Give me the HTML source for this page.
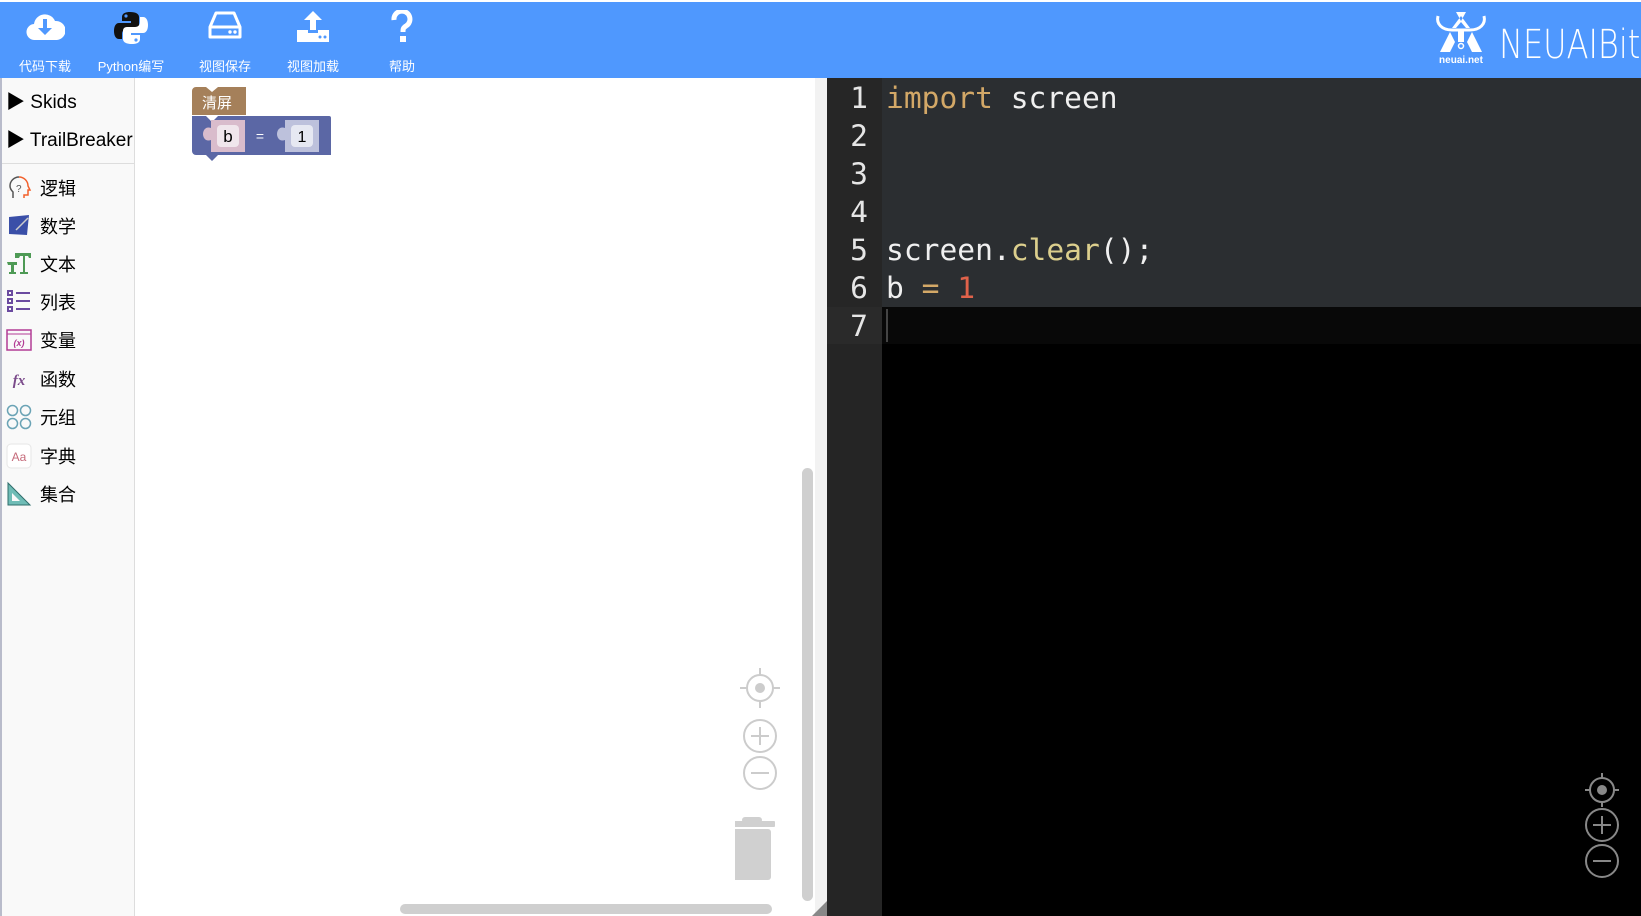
<!DOCTYPE html>
<html><head><meta charset="utf-8"><style>
*{margin:0;padding:0;box-sizing:border-box}
body{width:1641px;height:916px;overflow:hidden;position:relative;background:#fff;font-family:"Liberation Sans","Noto Sans CJK SC",sans-serif}
.hdr{position:absolute;left:0;top:2px;width:1641px;height:76px;background:#4f98fe}
.tb{position:absolute;top:0;width:90px;text-align:center;color:#fff;font-size:13px}
.tb svg{position:absolute;left:50%;transform:translateX(-50%);top:8px}
.tb span{position:absolute;left:0;right:0;top:54px}
.side{position:absolute;left:0;top:78px;width:135px;height:838px;background:#f9f9f9;border-right:1px solid #ddd}
.side:before{content:"";position:absolute;left:0;top:0;width:2px;height:100%;background:#b9bccb}
.it{position:absolute;left:40px;font-size:18px;color:#000}
.tr{position:absolute;left:6px;font-size:19px;color:#000}
.ic{position:absolute;left:6px;width:26px;height:26px}
.ed{position:absolute;left:827px;top:78px;width:814px;height:838px;background:#000}
.mono{font-family:"DejaVu Sans Mono","Liberation Mono",monospace;font-size:29.6px}
.ln{position:absolute;left:0;width:41px;text-align:right;color:#e6e6e6}
.cd{position:absolute;left:59px;color:#f0f0f0;white-space:pre}
.tx{position:absolute;left:0;right:0;top:3px}
</style></head><body>
<div class="hdr">
 <div class="tb" style="left:0">
  <svg width="40" height="34" viewBox="0 0 40 34"><path d="M10 30a8 8 0 0 1-1-16 11 11 0 0 1 21-3 8 8 0 0 1 2 19z" fill="#fff"/><path d="M18 9h4v9h5l-7 7-7-7h5z" fill="#4f98fe"/></svg>
  <span>代码下载</span></div>
 <div class="tb" style="left:86px">
  <svg width="34" height="36" viewBox="0 0 34 36"><path d="M16 2c-7 0-8 3-8 5v4h9v2H5c-3 0-5 3-5 8s2 8 5 8h3v-5c0-3 2-5 5-5h8c3 0 4-2 4-4V7c0-3-3-5-9-5z" fill="#111"/><circle cx="12" cy="6" r="1.6" fill="#4f98fe"/><path d="M18 34c7 0 8-3 8-5v-4h-9v-2h12c3 0 5-3 5-8s-2-8-5-8h-3v5c0 3-2 5-5 5h-8c-3 0-4 2-4 4v8c0 3 3 5 9 5z" fill="#fff"/><circle cx="22" cy="30" r="1.6" fill="#4f98fe"/></svg>
  <span>Python编写</span></div>
 <div class="tb" style="left:180px">
  <svg width="34" height="30" viewBox="0 0 34 30"><path d="M8 3h18l6 14v10H2V17z" fill="none" stroke="#fff" stroke-width="3" stroke-linejoin="round"/><path d="M2 17h30" stroke="#fff" stroke-width="3"/><circle cx="22" cy="22" r="1.7" fill="#fff"/><circle cx="27" cy="22" r="1.7" fill="#fff"/></svg>
  <span>视图保存</span></div>
 <div class="tb" style="left:268px">
  <svg width="36" height="34" viewBox="0 0 36 34"><path d="M18 1l9 9h-6v10h-6V10H9z" fill="#fff"/><path d="M2 20h11v3h10v-3h11v12H2z" fill="#fff"/><circle cx="25" cy="27" r="1.5" fill="#4f98fe"/><circle cx="30" cy="27" r="1.5" fill="#4f98fe"/></svg>
  <span>视图加载</span></div>
 <div class="tb" style="left:357px">
  <svg width="24" height="34" viewBox="0 0 24 34"><path d="M4 10a8 8 0 1 1 12 6c-3 2-3 3-3 6" fill="none" stroke="#fff" stroke-width="5"/><rect x="10" y="26" width="6" height="6" fill="#fff"/></svg>
  <span>帮助</span></div>
 <svg style="position:absolute;left:1434px;top:8px" width="54" height="54" viewBox="0 0 54 54"><path d="M4 6c-2 8 4 14 14 14h18c10 0 16-6 14-14" fill="none" stroke="#fff" stroke-width="3"/><path d="M22 2h10l-5 9z M27 6l-9 12h4l5-6 5 6h4z" fill="#fff"/><path d="M24 20h6v12h-6z" fill="#fff"/><circle cx="27" cy="36" r="2.5" fill="none" stroke="#fff" stroke-width="1.5"/><path d="M16 22l-10 20h10l5-10z M38 22l10 20H38l-5-10z" fill="#fff"/><text x="27" y="53" text-anchor="middle" font-size="10" font-weight="bold" fill="#fff" font-family="Liberation Sans">neuai.net</text></svg>
 <div style="position:absolute;left:1499px;top:20px;color:#fff;font-size:40px;font-family:'DejaVu Sans','Liberation Sans',sans-serif;font-weight:200;transform:scaleX(0.8);transform-origin:left top;white-space:nowrap">NEUAIBit</div>
</div>
<div class="side">
 <div class="tr" style="top:9px">▶ Skids</div>
 <div class="tr" style="top:47px">▶ TrailBreaker</div>
 <div style="position:absolute;left:2px;right:0;top:85px;height:1px;background:#ddd"></div>
 <svg class="ic" style="top:96px" viewBox="0 0 26 26"><path d="M13 3a9 9 0 0 1 9 9l2 4h-2v5h-4v3" fill="none" stroke="#f2602b" stroke-width="1.5"/><path d="M13 3a9 9 0 0 0-9 9c0 3 2 5 3 6v6" fill="none" stroke="#555" stroke-width="1.5"/><text x="10" y="18" font-size="10" fill="#555">?</text></svg>
 <div class="it" style="top:97px">逻辑</div>
 <svg class="ic" style="top:134px" viewBox="0 0 26 26"><path d="M3 5l20-2-2 20-18-1z" fill="#3a4fa8"/><path d="M10 18l12-12" stroke="#ccc" stroke-width="1.5"/></svg>
 <div class="it" style="top:135px">数学</div>
 <svg class="ic" style="top:172px" viewBox="0 0 26 26"><path d="M9 3h16v5h-2l-1-2h-3v16h3v2H14v-2h3V6h-3l-1 2H9z M1 12h10v3H8v7h2v2H3v-2h2v-7H2z" fill="#4e9a55"/></svg>
 <div class="it" style="top:173px">文本</div>
 <svg class="ic" style="top:210px" viewBox="0 0 26 26" fill="none" stroke="#6b4aa0" stroke-width="2"><rect x="2" y="3" width="4" height="4"/><rect x="2" y="11" width="4" height="4"/><rect x="2" y="19" width="4" height="4"/><path d="M10 5h14M10 13h14M10 21h14"/></svg>
 <div class="it" style="top:211px">列表</div>
 <svg class="ic" style="top:249px" viewBox="0 0 26 26"><rect x="1" y="3" width="24" height="20" fill="none" stroke="#b23c95" stroke-width="1.5"/><path d="M1 7h24" stroke="#b23c95"/><text x="13" y="19" text-anchor="middle" font-size="9" font-style="italic" font-weight="bold" fill="#b23c95">(x)</text></svg>
 <div class="it" style="top:249px">变量</div>
 <svg class="ic" style="top:288px" viewBox="0 0 26 26"><text x="13" y="19" text-anchor="middle" font-size="15" font-style="italic" font-weight="bold" fill="#7a4a8a" font-family="Liberation Serif">fx</text></svg>
 <div class="it" style="top:288px">函数</div>
 <svg class="ic" style="top:326px" viewBox="0 0 26 26" fill="none" stroke="#6aa3b5" stroke-width="1.5"><circle cx="6.5" cy="6.5" r="5"/><circle cx="19.5" cy="6.5" r="5"/><circle cx="6.5" cy="19.5" r="5"/><circle cx="19.5" cy="19.5" r="5"/></svg>
 <div class="it" style="top:326px">元组</div>
 <svg class="ic" style="top:365px" viewBox="0 0 26 26"><rect x="1" y="1" width="24" height="24" rx="4" fill="#fff" stroke="#e6e6e6"/><text x="13" y="18" text-anchor="middle" font-size="12" fill="#c56a7a">Aa</text></svg>
 <div class="it" style="top:365px">字典</div>
 <svg class="ic" style="top:403px" viewBox="0 0 26 26"><path d="M2 2v22h22z" fill="#6fbcb6" stroke="#2f6e6c"/><path d="M6 12v8h8z" fill="#f9f9f9"/></svg>
 <div class="it" style="top:403px">集合</div>
</div>
<svg style="position:absolute;left:190px;top:84px" width="150" height="80" viewBox="0 0 150 80">
 <path d="M2 7a4 4 0 0 1 4-4h10l6 5 6-5h28v28H2z" fill="#a5805a"/>
 <text x="12" y="24" font-size="15" fill="#fff" font-family="Noto Sans CJK SC">清屏</text>
 <path d="M2 32h14l6 6 6-6h111a2 2 0 0 1 2 2v37H28l-6 6-6-6H6a4 4 0 0 1-4-4z" fill="#5b67a5"/>
 <rect x="21" y="36" width="34" height="32" fill="#d9bccc"/><path d="M21 44c-5-2-8 2-8 6s3 8 8 6z" fill="#d9bccc"/>
 <rect x="27" y="41" width="22" height="22" rx="4" fill="#f0e6ec"/>
 <text x="38" y="58" text-anchor="middle" font-size="17" fill="#000">b</text>
 <text x="70" y="57" text-anchor="middle" font-size="14" fill="#fff">=</text>
 <rect x="95" y="36" width="34" height="32" fill="#bdc1dc"/><path d="M95 44c-5-2-8 2-8 6s3 8 8 6z" fill="#bdc1dc"/>
 <rect x="101" y="41" width="22" height="22" rx="4" fill="#e6e8f2"/>
 <text x="112" y="58" text-anchor="middle" font-size="16" fill="#000">1</text>
</svg>
<svg style="position:absolute;left:735px;top:665px" width="50" height="230" viewBox="0 0 50 230" fill="none" stroke="#ccc" stroke-width="2">
 <circle cx="25" cy="23" r="13"/><path d="M25 3v7M25 36v7M5 23h7M38 23h7"/><circle cx="25" cy="23" r="5" fill="#ccc" stroke="none"/>
 <circle cx="25" cy="71" r="16"/><path d="M16 71h18M25 62v18"/>
 <circle cx="25" cy="108" r="16"/><path d="M16 108h18"/>
 <rect x="-6" y="156" width="46" height="6" rx="1" fill="#d0d0d0" stroke="none"/><rect x="7" y="152" width="20" height="6" rx="3" fill="#d0d0d0" stroke="none"/>
 <rect x="-4" y="164" width="40" height="51" rx="3" fill="#d0d0d0" stroke="none"/>
</svg>
<div style="position:absolute;left:802px;top:468px;width:11px;height:433px;border-radius:6px;background:#cfcfcf"></div>
<div style="position:absolute;left:400px;top:904px;width:372px;height:10px;border-radius:5px;background:#cfcfcf"></div>
<div style="position:absolute;left:815px;top:78px;width:12px;height:838px;background:#f2f2f2"></div>
<div style="position:absolute;left:812px;top:901px;width:0;height:0;border-left:15px solid transparent;border-bottom:15px solid #888"></div>
<div class="ed mono">
 <div style="position:absolute;left:0;top:0;width:55px;height:229px;background:#262626"></div>
 <div style="position:absolute;left:55px;top:0;right:0;height:229px;background:#2b2e31"></div>
 <div style="position:absolute;left:0;top:229px;width:55px;height:37px;background:#2a2a2a"></div>
 <div style="position:absolute;left:55px;top:229px;right:0;height:37px;background:#080808"></div>
 <div style="position:absolute;left:0;top:266px;width:55px;height:572px;background:#252525"></div>
 <div style="position:absolute;left:59px;top:231px;width:2px;height:33px;background:#444"></div>
 <div class="ln" style="top:3px">1</div><div class="ln" style="top:41px">2</div><div class="ln" style="top:79px">3</div><div class="ln" style="top:117px">4</div><div class="ln" style="top:155px">5</div><div class="ln" style="top:193px">6</div><div class="ln" style="top:231px">7</div>
 <div class="cd" style="top:3px"><span style="color:#d3a867">import</span> screen</div>
 <div class="cd" style="top:155px">screen.<span style="color:#dccf8d">clear</span>();</div>
 <div class="cd" style="top:193px">b <span style="color:#d3a867">=</span> <span style="color:#e0624a">1</span></div>
</div>
<svg style="position:absolute;left:1580px;top:768px" width="44" height="114" viewBox="0 0 44 114" fill="none" stroke="#888" stroke-width="2">
 <circle cx="22" cy="22" r="12"/><path d="M22 5v5M22 34v5M5 22h5M34 22h5"/><circle cx="22" cy="22" r="5" fill="#888" stroke="none"/>
 <circle cx="22" cy="57" r="16"/><path d="M13 57h18M22 48v18"/>
 <circle cx="22" cy="93" r="16"/><path d="M13 93h18"/>
</svg>
</body></html>
